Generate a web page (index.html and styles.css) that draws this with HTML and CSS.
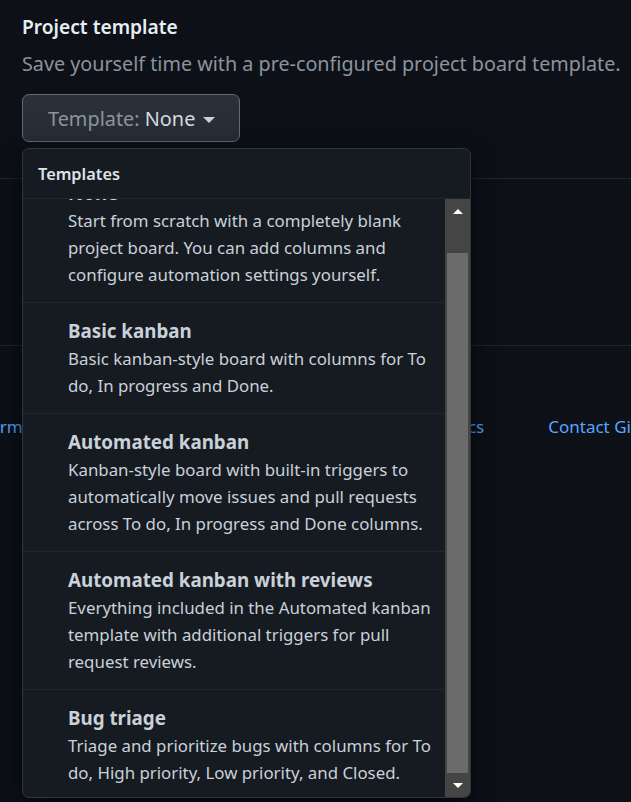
FILE: index.html
```html
<!DOCTYPE html>
<html lang="en">
<head>
<meta charset="utf-8">
<title>Project template</title>
<link rel="stylesheet" href="styles.css">
</head>
<body>
<div class="page">
  <section class="section section-template">
    <h2 class="section-title">Project template</h2>
    <p class="section-note">Save yourself time with a pre-configured project board template.</p>
    <div class="picker">
      <button class="picker-btn" type="button"><span class="picker-label">Template:</span>&nbsp;<span class="picker-value">None</span><span class="caret"></span></button>
      <div class="menu">
        <div class="menu-header">Templates</div>
        <div class="menu-body">
          <div class="menu-list">
            <div class="menu-scroll">
              <div class="menu-item">
                <div class="item-title">None</div>
                <div class="item-desc">Start from scratch with a completely blank project board. You can add columns and configure automation settings yourself.</div>
              </div>
              <div class="menu-item">
                <div class="item-title">Basic kanban</div>
                <div class="item-desc">Basic kanban-style board with columns for To do, In progress and Done.</div>
              </div>
              <div class="menu-item">
                <div class="item-title">Automated kanban</div>
                <div class="item-desc">Kanban-style board with built-in triggers to automatically move issues and pull requests across To do, In progress and Done columns.</div>
              </div>
              <div class="menu-item">
                <div class="item-title">Automated kanban with reviews</div>
                <div class="item-desc">Everything included in the Automated kanban template with additional triggers for pull request reviews.</div>
              </div>
              <div class="menu-item">
                <div class="item-title">Bug triage</div>
                <div class="item-desc">Triage and prioritize bugs with columns for To do, High priority, Low priority, and Closed.</div>
              </div>
            </div>
          </div>
          <div class="scrollbar">
            <div class="sb-btn"><span class="arrow-up"></span></div>
            <div class="sb-gap"></div>
            <div class="sb-thumb"></div>
            <div class="sb-btn sb-btn-down"><span class="arrow-down"></span></div>
          </div>
        </div>
      </div>
    </div>
  </section>
  <section class="section section-create"></section>
  <footer class="footer">
    <nav class="footer-group">
      <a class="footer-link" href="#">Terms</a>
      <a class="footer-link" href="#">Privacy</a>
      <a class="footer-link" href="#">Security</a>
      <a class="footer-link" href="#">Status</a>
      <a class="footer-link" href="#">Docs</a>
    </nav>
    <nav class="footer-group">
      <a class="footer-link" href="#">Contact GitHub</a>
      <a class="footer-link" href="#">Pricing</a>
    </nav>
  </footer>
</div>
</body>
</html>
```
FILE: styles.css
```css
html, body {
  margin: 0;
  padding: 0;
  background: #0d1117;
  overflow: hidden;
}
body {
  font-family: "Noto Sans", "Open Sans", sans-serif;
  color: #c9d1d9;
}
.page {
  width: 631px;
  height: 802px;
  overflow: hidden;
}
.section {
  border-bottom: 1px solid #21262d;
  padding: 0 0 0 22px;
}
.section-template {
  padding-top: 12px;
  padding-bottom: 36px;
}
.section-create {
  height: 167px;
  box-sizing: border-box;
}
.section-title {
  margin: 0;
  font-size: 19.2px;
  font-weight: 600;
  line-height: 30px;
  color: #e6edf3;
}
.section-note {
  margin: 7px 0 0;
  font-size: 19.76px;
  line-height: 30px;
  color: #8b949e;
  white-space: nowrap;
}
.picker {
  position: relative;
  margin-top: 15px;
  width: 218px;
}
.picker-btn {
  display: flex;
  align-items: center;
  box-sizing: border-box;
  width: 218px;
  height: 48px;
  padding: 1px 0 0 25px;
  border: 1px solid #646b74;
  border-radius: 7px;
  background: linear-gradient(#2b3139, #262c34);
  font-family: inherit;
  font-size: 19.86px;
  line-height: 30px;
  color: #c9d1d9;
  cursor: pointer;
}
.picker-label {
  color: #8b949e;
}
.picker-value {
  color: #d3dae1;
}
.caret {
  display: inline-block;
  width: 0;
  height: 0;
  margin-left: 8px;
  margin-top: 2px;
  border-left: 6px solid transparent;
  border-right: 6px solid transparent;
  border-top: 6px solid #c9d1d9;
}
.menu {
  position: absolute;
  top: calc(100% + 6px);
  left: 0;
  z-index: 10;
  box-sizing: border-box;
  width: 449px;
  height: 650px;
  display: flex;
  flex-direction: column;
  background: #161b22;
  border: 1px solid #30363d;
  border-radius: 7px;
  box-shadow: 0 8px 24px rgba(1, 4, 9, 0.85);
  overflow: hidden;
}
.menu-header {
  flex: 0 0 49px;
  display: flex;
  align-items: center;
  padding-left: 15px;
  border-bottom: 1px solid #21262d;
  font-size: 16.33px;
  font-weight: 600;
  color: #dde3ea;
}
.menu-body {
  flex: 1;
  display: flex;
  min-height: 0;
}
.menu-list {
  flex: 1;
  overflow: hidden;
}
.menu-scroll {
  margin-top: -34px;
}
.menu-item {
  padding: 14px 5px 14px 45px;
  border-bottom: 1px solid #21262d;
}
.item-title {
  font-size: 18.8px;
  font-weight: 700;
  line-height: 28px;
  color: #c9d1d9;
}
.item-desc {
  font-size: 16.85px;
  line-height: 27px;
  color: #c9d1d9;
}
.scrollbar {
  flex: 0 0 25px;
  display: flex;
  flex-direction: column;
  background: #454545;
}
.sb-btn {
  flex: 0 0 25px;
  display: flex;
  align-items: center;
  justify-content: center;
}
.sb-btn-down {
  flex-basis: 24px;
}
.sb-gap {
  flex: 0 0 29px;
}
.sb-thumb {
  flex: 1;
  margin: 0 2px;
  background: #6b6b6b;
}
.arrow-up {
  width: 0;
  height: 0;
  border-left: 5px solid transparent;
  border-right: 5px solid transparent;
  border-bottom: 5px solid #ffffff;
}
.arrow-down {
  width: 0;
  height: 0;
  border-left: 5px solid transparent;
  border-right: 5px solid transparent;
  border-top: 5px solid #ffffff;
}
.footer {
  display: flex;
  gap: 64px;
  margin: 66px 0 0 -18px;
  white-space: nowrap;
}
.footer-group {
  display: flex;
  gap: 61px;
}
.footer-link {
  font-size: 17px;
  line-height: 30px;
  color: #58a6ff;
  text-decoration: none;
}
```
